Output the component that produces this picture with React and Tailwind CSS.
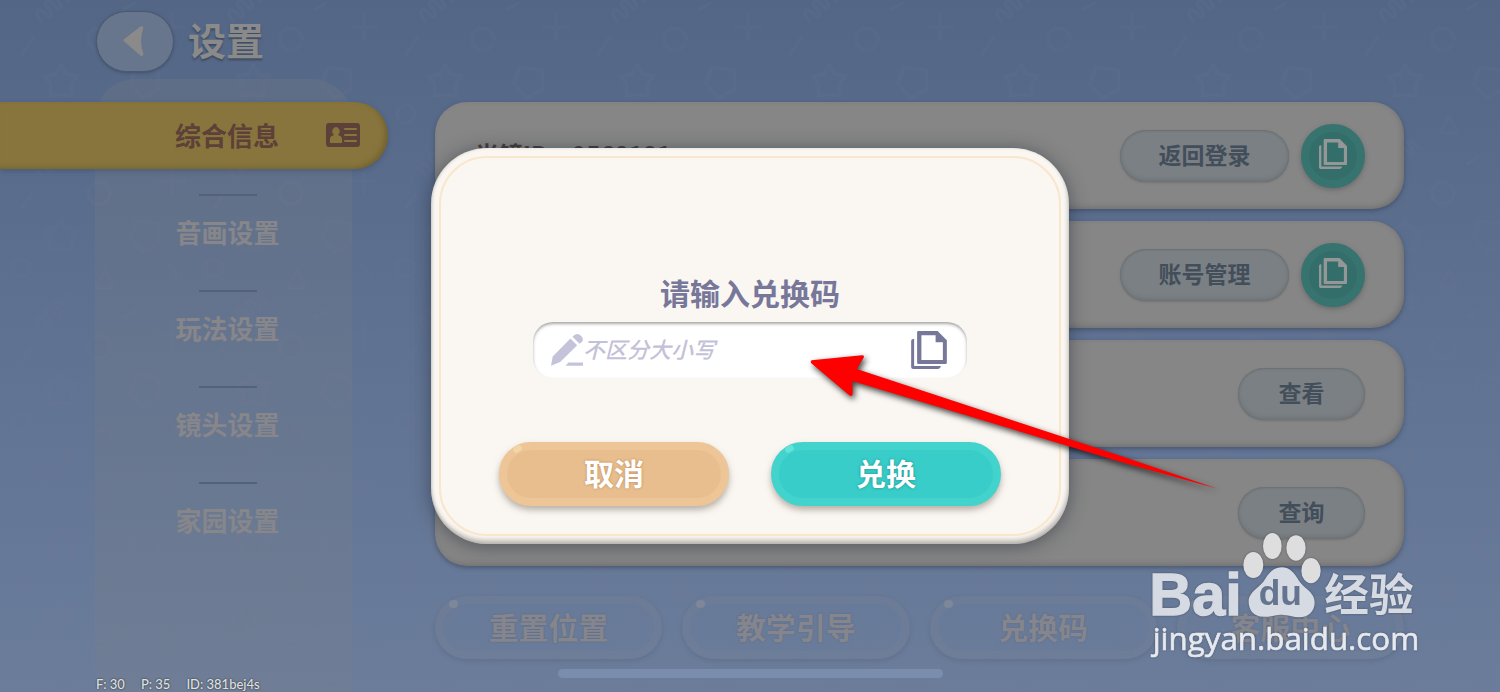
import React, { useState } from "react";

const navItems = ["音画设置", "玩法设置", "镜头设置", "家园设置"];

const cards = [
    { id: 1, label: "光镜ID：9568181", action: "返回登录", copy: true },
    { id: 2, label: "", action: "账号管理", copy: true },
    { id: 3, label: "", action: "查看", copy: false },
    { id: 4, label: "", action: "查询", copy: false },
];

const footerButtons = ["重置位置", "教学引导", "兑换码", "客服中心"];

function CopyIcon({ className }) {
    return (
        <svg viewBox="0 0 108 115" className={className} fill="currentColor" fillRule="evenodd">
            <path d="M22 0H80L108 28V96Q108 100 104 100H22Q18 100 18 96V4Q18 0 22 0ZM31 13V88H96V34H74V13Z" />
            <path d="M0 30Q0 24 6 24H9V106H90Q88 115 80 115H6Q0 115 0 109Z" />
        </svg>
    );
}

function Background() {
    return (
        <svg className="absolute inset-0 w-full h-full" fill="none">
            <defs>
                <path
                    id="squiggle"
                    d="M42 22L37 15Q36 9 41 10L49 17Q53 17 51 12L45 4Q45 -1 50 1L58 9Q62 9 60 4L54 -4Q54 -9 59 -7L67 1Q71 1 69 -4L64 -10Q64 -14 68 -12L74 -6"
                />
                <pattern id="toys" width="192" height="154" patternUnits="userSpaceOnUse">
                    <g stroke="#74728c" strokeOpacity="0.15" strokeWidth="3" strokeLinecap="round" strokeLinejoin="round">
                        <use href="#squiggle" />
                        <use href="#squiggle" y="154" />
                        <path d="M123 10L134 3" />
                        <path d="M172 14V40M160 27H185" />
                        <circle cx="99" cy="39" r="11" />
                        <path d="M22 54L33 38" />
                        <path d="M61 65L66 74L77 76L71 85L72 96L61 94L50 96L51 85L45 76L56 74Z" />
                        <path d="M136 67L158 70L159 89L143 98L130 84Z" />
                        <circle cx="22" cy="114" r="9" />
                        <path d="M167 109L179 123" />
                        <path d="M105 116L114 133H96Z" />
                    </g>
                </pattern>
            </defs>
            <rect width="100%" height="100%" fill="url(#toys)" />
        </svg>
    );
}

function Sidebar() {
    return (
        <nav className="ml-[95px] w-[257px] pt-[23px] rounded-t-[40px] bg-[#808080]/20 shrink-0">
            <button className="-ml-[95px] w-[388px] h-[67px] pl-[175px] pr-7 pb-[2px] flex items-center justify-between rounded-r-full bg-[#87753d] text-[#5d4138] text-[26px] font-bold shadow-[inset_-4px_-2px_5px_-1px_rgba(80,65,20,0.35),0_2px_5px_rgba(50,60,80,0.35)]">
                综合信息
                <svg viewBox="0 0 34 24" className="w-[34px] h-6">
                    <rect width="34" height="24" rx="3" fill="#5d4138" />
                    <path d="M4 20V16Q4 13 8 12Q5 9 7 6Q10 2 13 6Q15 9 12 12Q16 13 16 16V20Z" fill="#87753d" />
                    <path d="M19 6H30M19 12H30M19 18H30" stroke="#87753d" strokeWidth="2" strokeLinecap="round" />
                </svg>
            </button>
            <ul className="pt-[25px] pl-2">
                {navItems.map((item) => (
                    <li key={item} className="h-24 flex flex-col items-center">
                        <span className="w-[58px] h-[2px] bg-[#53617c]" />
                        <button className="mt-4 text-[26px] leading-10 font-bold text-[#87868a]">{item}</button>
                    </li>
                ))}
            </ul>
        </nav>
    );
}

function Card({ label, action, copy }) {
    return (
        <div className="h-[107px] pl-10 pr-[39px] flex items-center justify-between rounded-[32px] bg-[#868686] shadow-[inset_-2px_-2px_5px_rgba(70,70,70,0.3),0_2px_4px_rgba(50,60,80,0.5)]">
            <span className="pb-1 text-[24px] font-bold text-[#453d3f]">{label}</span>
            <div className="flex items-center gap-3">
                <button
                    className={
                        (copy ? "w-[169px]" : "w-[127px]") +
                        " h-[52px] pb-[2px] rounded-full bg-[#7b8084] text-[23px] font-bold text-[#434e5b] shadow-[inset_0_-2px_4px_rgba(70,75,80,0.3),inset_0_1px_2px_rgba(70,75,80,0.3),0_1px_2px_rgba(90,90,90,0.4)]"
                    }
                >
                    {action}
                </button>
                {copy && (
                    <button
                        aria-label="copy"
                        className="w-16 h-16 flex items-center justify-center rounded-full bg-[#346e6b] text-[#949796] border-8 border-[#37736f] shadow-[0_2px_5px_rgba(60,60,60,0.4)]"
                    >
                        <CopyIcon className="w-7 h-8 -mt-1 shrink-0" />
                    </button>
                )}
            </div>
        </div>
    );
}

function Arrow() {
    return (
        <svg
            viewBox="0 0 1320 510"
            className="absolute left-[359px] top-[182px] w-[440px] h-[170px] overflow-visible pointer-events-none drop-shadow-[2px_3px_3px_rgba(0,0,0,0.75)]"
        >
            <path
                d="M65 91L216 76Q224 76 221 83L200 117L1000 380L1283 476L1000 398L187 153L188 193Q185 202 178 196L64 100Q60 94 65 91Z"
                fill="#fe0000"
            />
        </svg>
    );
}

function RedeemDialog() {
    const [code, setCode] = useState("");

    return (
        <div className="absolute inset-0 flex items-center justify-center">
            <div
                role="dialog"
                aria-labelledby="redeem-title"
                className="relative w-[638px] p-2 rounded-[56px] bg-[#faf6f1] shadow-[inset_-1px_-4px_4px_rgba(120,115,110,0.45),inset_1px_0_3px_rgba(120,115,110,0.25),0_2px_18px_rgba(30,35,50,0.5)]"
            >
                <div className="h-[380px] pt-[114px] flex flex-col items-center rounded-[48px] border-2 border-[#fae6ca]">
                    <label id="redeem-title" htmlFor="code" className="text-[30px] leading-10 font-bold text-[#77779a]">
                        请输入兑换码
                    </label>
                    <div className="mt-[10px] w-[434px] h-14 pl-[18px] pr-5 flex items-center rounded-[20px] bg-white shadow-[inset_0_2px_3px_rgba(100,100,100,0.55)]">
                        <svg viewBox="0 0 94 94" className="w-8 h-8 shrink-0" fill="#c5c3da">
                            <path d="M0 93L5 66L57 13L77 33L27 82Z" />
                            <path d="M63 8L70 2Q80 -3 89 6Q97 15 91 23L84 29Z" />
                            <path d="M51 84H94V93H43Z" />
                        </svg>
                        <input
                            id="code"
                            type="text"
                            value={code}
                            onChange={(e) => setCode(e.target.value)}
                            placeholder="不区分大小写"
                            className="flex-1 min-w-0 pb-1 text-[22px] italic font-medium text-[#77779a] placeholder:text-[#c3c1d8] outline-none"
                        />
                        <button aria-label="paste" className="text-[#77779a]">
                            <CopyIcon className="w-9 h-[38px]" />
                        </button>
                    </div>
                    <div className="mt-16 flex gap-[42px]">
                        <button className="relative w-[230px] h-16 pb-1 rounded-full bg-[#e9be8f] border-8 border-[#edc596] text-[30px] leading-none font-bold text-white text-shadow-[0_0_3px_#b88a58] shadow-[0_4px_6px_rgba(120,110,100,0.5)]">
                            <span className="absolute left-[6px] -top-1 w-[9px] h-[6px] rounded-full -rotate-30 bg-[#f3d6a8]" />
                            取消
                        </button>
                        <button className="relative w-[230px] h-16 pb-1 rounded-full bg-[#38cdc8] border-8 border-[#42d3cd] text-[30px] leading-none font-bold text-white text-shadow-[0_0_3px_#1c8f8b] shadow-[0_4px_6px_rgba(120,110,100,0.5)]">
                            <span className="absolute left-[6px] -top-1 w-[9px] h-[6px] rounded-full -rotate-30 bg-[#62e4dc]" />
                            兑换
                        </button>
                    </div>
                </div>
                <Arrow />
            </div>
        </div>
    );
}

function Watermark() {
    return (
        <svg
            viewBox="0 0 930 516"
            className="absolute right-[60px] bottom-0 w-[310px] h-[172px] pointer-events-none drop-shadow-[0_0_1px_rgba(50,60,80,0.6)]"
            fill="#d5dae3"
        >
            <text x="58" y="285" stroke="#d5dae3" strokeWidth="4" className="font-['Liberation_Sans',sans-serif] font-bold text-[178px]">Bai</text>
            <g fill="#dedede">
                <ellipse cx="370" cy="135" rx="30" ry="39" />
                <ellipse cx="427" cy="78" rx="28" ry="39" />
                <ellipse cx="498" cy="84" rx="29" ry="38" />
                <ellipse cx="543" cy="152" rx="29" ry="38" />
            </g>
            <path d="M455 142C480 142 494 160 507 182C520 204 554 215 554 247C554 275 535 292 508 292C490 292 475 284 455 284C435 284 420 292 400 290C372 290 356 270 356 245C356 215 393 200 405 178C416 156 435 142 455 142Z" />
            <text x="386" y="256" fill="#66758f" className="font-['Liberation_Sans',sans-serif] font-bold text-[106px]">du</text>
            <text x="583" y="272" className="font-['Noto_Sans_CJK_SC',sans-serif] font-bold text-[134px]">经验</text>
            <text x="68" y="391" fill="#e6e9ee" stroke="#e6e9ee" strokeWidth="2" className="font-['Open_Sans',sans-serif] text-[94px]">jingyan.baidu.com</text>
        </svg>
    );
}

export default function App() {
    return (
        <div className="relative min-h-screen overflow-hidden flex flex-col bg-linear-to-b from-[#536686] via-[#5f7292] to-[#6b7d9b] font-['Noto_Sans_CJK_SC',sans-serif]">
            <Background />

            {/* Header */}
            <header className="relative h-[79px] pl-[96px] pt-[11px] flex items-start gap-[14px]">
                <button
                    aria-label="back"
                    className="w-[78px] h-[61px] pr-1 flex items-center justify-center rounded-full bg-[#67768c] border border-[#4a5970] shadow-[0_1px_3px_rgba(50,60,80,0.5)]"
                >
                    <svg viewBox="0 0 64 94" className="w-[21px] h-[31px]" fill="#8b8a8b">
                        <path d="M3 46Q0 43 3 40L52 2Q62 -2 62 6Q48 44 62 84Q62 94 53 90Z" />
                    </svg>
                </button>
                <h1 className="text-[38px] leading-[56px] font-bold text-[#8a8a8b] text-shadow-[0_2px_2px_#3e4b61]">设置</h1>
            </header>

            {/* Settings body */}
            <div className="relative flex-1 flex">
                <Sidebar />
                <main className="flex-1 ml-[83px] mr-24 mt-[23px] flex flex-col gap-3">
                    {cards.map((card) => (
                        <Card key={card.id} {...card} />
                    ))}
                    <div className="mt-[18px] grid grid-cols-4 gap-5">
                        {footerButtons.map((name) => (
                            <button
                                key={name}
                                className="relative h-[63px] pb-1 rounded-full border-8 border-[#8a8a8a]/12 bg-[#70809a]/10 text-[30px] leading-none font-bold text-[#85868d] text-shadow-[0_0_2px_#5b6880] shadow-[0_2px_4px_rgba(70,80,105,0.25)]"
                            >
                                <span className="absolute left-[6px] -top-1 w-[9px] h-2 rounded-full bg-[#7d8799]" />
                                {name}
                            </button>
                        ))}
                    </div>
                </main>
            </div>

            <RedeemDialog />

            {/* Debug info and home bar */}
            <p className="absolute left-[96px] bottom-0 flex gap-4 font-['Lato',sans-serif] font-medium text-[13px] leading-4 text-[#dfe0e3] text-shadow-[0_0_2px_#222]">
                <span>F: 30</span>
                <span>P: 35</span>
                <span>ID: 381bej4s</span>
            </p>
            <div className="absolute inset-x-0 bottom-[14px] mx-auto w-[385px] h-[9px] rounded-full bg-[#7a8dad]" />
            <Watermark />
        </div>
    );
}
